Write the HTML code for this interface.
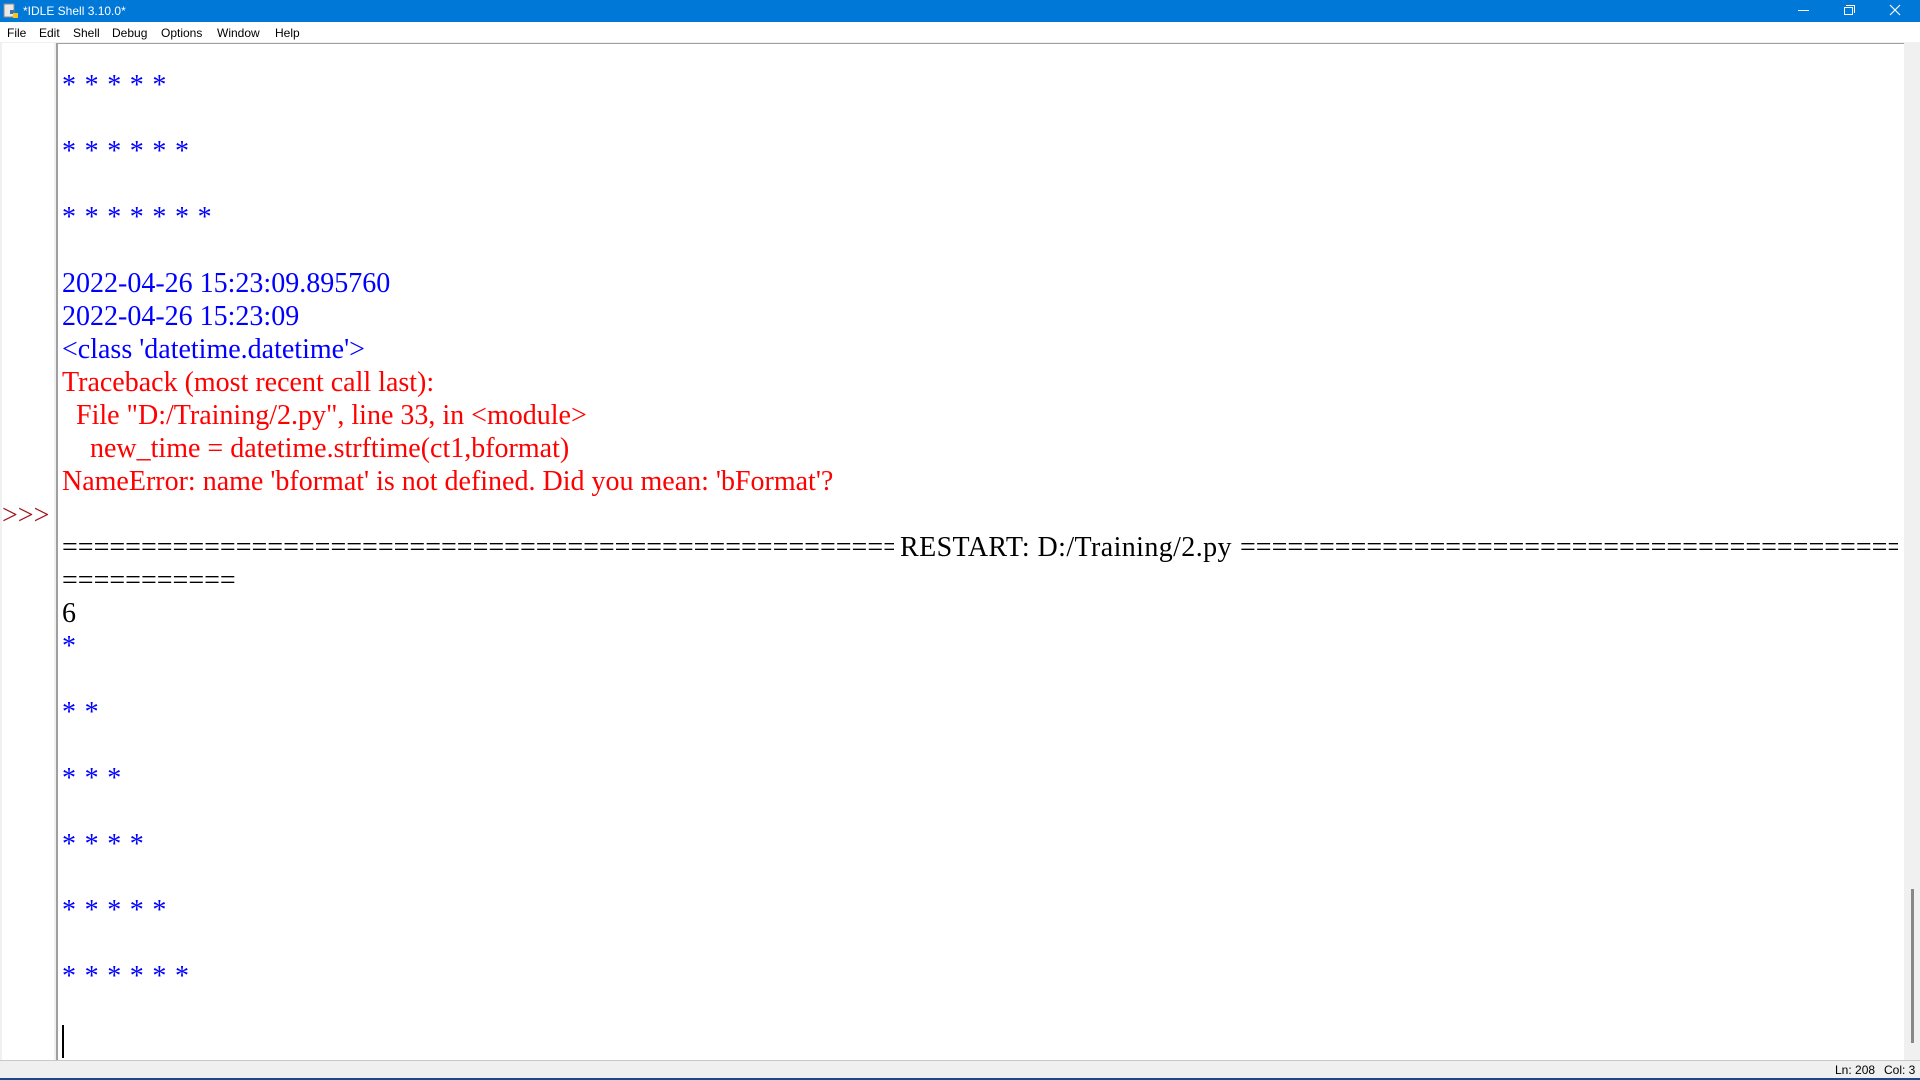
<!DOCTYPE html>
<html><head><meta charset="utf-8"><style>
*{margin:0;padding:0;box-sizing:border-box}
body{width:1920px;height:1080px;overflow:hidden;background:#f0f0f0;position:relative;font-family:"Liberation Sans",sans-serif}
#title{position:absolute;left:0;top:0;width:1920px;height:22px;background:#0078d7;color:#fff;font-size:12px}
#title .t{position:absolute;left:23px;top:4px}
#menu{position:absolute;left:0;top:22px;width:1920px;height:20px;background:#fff;font-size:12px;color:#000}
#menu span{position:absolute;top:4px}
#gutter{position:absolute;left:2px;top:43px;width:52px;height:1017px;background:#fff}
#txt{position:absolute;left:56px;top:43px;width:1848px;height:1017px;background:#fff;border-left:2px solid #a0a0a0;border-top:1px solid #a0a0a0;overflow:hidden}
.l{position:absolute;left:62px;white-space:pre;font-family:"Liberation Serif",serif;font-size:28px;line-height:33px;height:33px;top:1px}
.b{color:#0000ff}.r{color:#ff0000}.k{color:#000}
.s{letter-spacing:0.8px}
#status{position:absolute;left:0;top:1060px;width:1920px;height:18px;background:#f0f0f0;border-top:1px solid #c8c8c8;font-size:12px}
</style></head><body>
<div id="title">
<svg style="position:absolute;left:3px;top:3px" width="16" height="16"><rect x="1" y="1" width="10" height="13" fill="#e8e8e8" stroke="#888"/><rect x="7" y="7" width="4" height="4" fill="#3a74b0"/><rect x="10" y="10" width="5" height="5" fill="#f5c518"/></svg>
<span class="t">*IDLE Shell 3.10.0*</span>
<div style="position:absolute;left:1798px;top:10px;width:11px;height:1px;background:#fff"></div>
<div style="position:absolute;left:1844px;top:7px;width:9px;height:8px;border:1px solid #fff"></div>
<div style="position:absolute;left:1846px;top:5px;width:9px;height:8px;border-top:1px solid #fff;border-right:1px solid #fff"></div>
<svg style="position:absolute;left:1889px;top:4px" width="12" height="12"><path d="M1 1L11 11M11 1L1 11" stroke="#fff" stroke-width="1.2"/></svg>
</div>
<div id="menu"><span style="left:7px">File</span><span style="left:39px">Edit</span><span style="left:73px">Shell</span><span style="left:112px">Debug</span><span style="left:161px">Options</span><span style="left:217px">Window</span><span style="left:275px">Help</span></div>
<div id="gutter"></div>
<div id="txt"></div>
<div class="l" style="left:2px;top:499px;color:#a0141e">&gt;&gt;&gt;</div>
<div class="l b s" style="top:69px">* * * * *</div>
<div class="l b s" style="top:135px">* * * * * *</div>
<div class="l b s" style="top:201px">* * * * * * *</div>
<div class="l b" style="top:267px">2022-04-26 15:23:09.895760</div>
<div class="l b" style="top:300px">2022-04-26 15:23:09</div>
<div class="l b" style="top:333px">&lt;class 'datetime.datetime'&gt;</div>
<div class="l r" style="top:366px">Traceback (most recent call last):</div>
<div class="l r" style="top:399px">  File "D:/Training/2.py", line 33, in &lt;module&gt;</div>
<div class="l r" style="top:432px">    new_time = datetime.strftime(ct1,bformat)</div>
<div class="l r" style="top:465px">NameError: name 'bformat' is not defined. Did you mean: 'bFormat'?</div>
<div class="l k" style="top:531px;width:832px;overflow:hidden">=======================================================================</div>
<div class="l k" style="top:531px;left:900px;letter-spacing:0.4px">RESTART: D:/Training/2.py</div>
<div class="l k" style="top:531px;left:1240px;width:658px;overflow:hidden">=======================================================================</div>
<div class="l k" style="top:564px;width:174px;overflow:hidden">==============</div>
<div class="l k" style="top:597px">6</div>
<div class="l b s" style="top:630px">*</div>
<div class="l b s" style="top:696px">* *</div>
<div class="l b s" style="top:762px">* * *</div>
<div class="l b s" style="top:828px">* * * *</div>
<div class="l b s" style="top:894px">* * * * *</div>
<div class="l b s" style="top:960px">* * * * * *</div>
<div style="position:absolute;left:62px;top:1025px;width:2px;height:33px;background:#000"></div>
<div style="position:absolute;left:1911px;top:889px;width:3px;height:154px;background:#888"></div>
<div id="status"><span style="position:absolute;left:1835px;top:2px">Ln: 208</span><span style="position:absolute;left:1884px;top:2px">Col: 3</span></div>
<div style="position:absolute;left:0;top:1078px;width:1920px;height:2px;background:#1a4a8a"></div>
</body></html>
